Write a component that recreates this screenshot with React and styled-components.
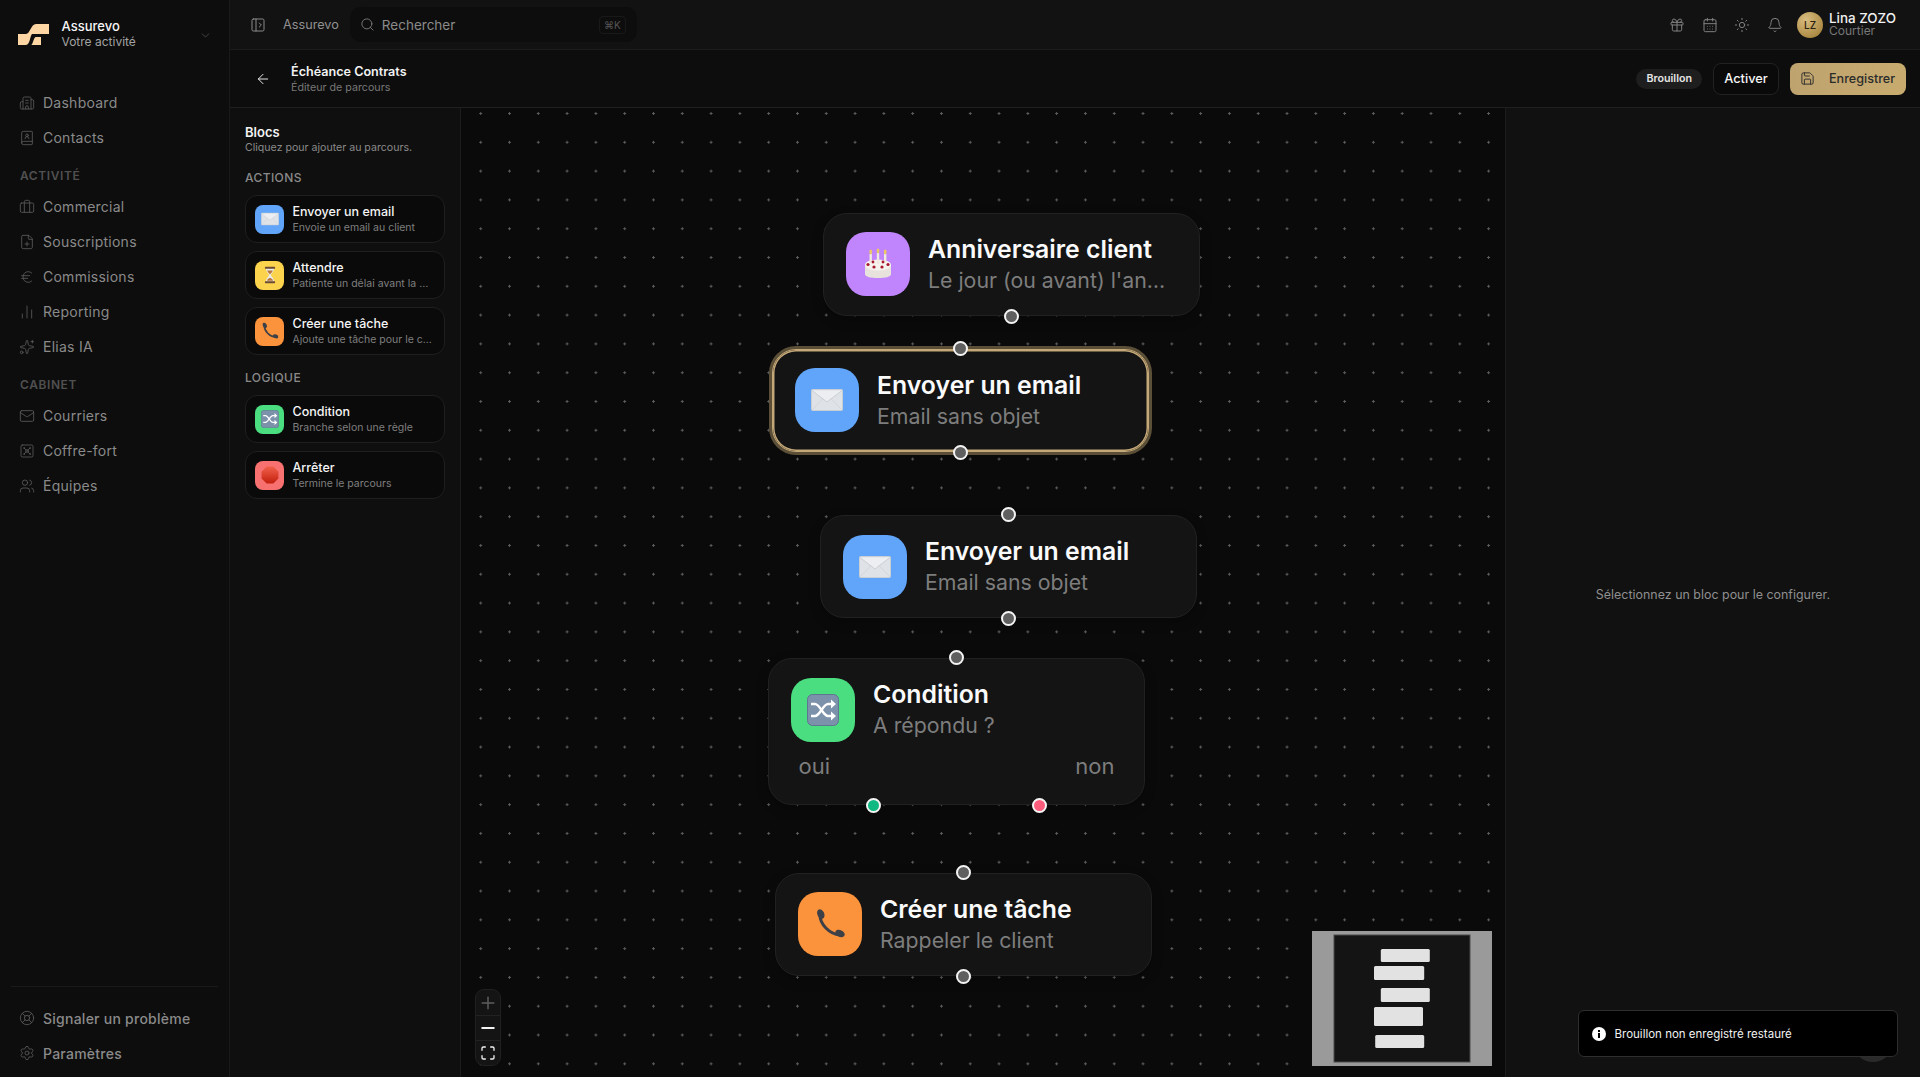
import React from 'react'
import styled, { createGlobalStyle } from 'styled-components'
import {
  ArrowLeft, Bell, BookUser, Briefcase, Building2, CalendarDays, ChartNoAxesColumn, ChevronDown,
  Euro, FilePlus, Gift, LifeBuoy, Mail, Maximize, Minus, PanelLeftOpen, Plus, Save, Search,
  Settings, Sparkles, Sun, Users, Vault,
} from 'lucide-react'

const GlobalStyle = createGlobalStyle`
  html, body, #root { margin: 0; padding: 0; height: 100%; }
  body { background: #0d0d0d; font-family: Inter, "Noto Sans", sans-serif; color: #fff; overflow: hidden; }
  * { box-sizing: border-box; }
`

// emoji are drawn, no colour emoji font on the box
const EnvelopeEmoji = ({ size }) => (
  <svg width={size} height={size} viewBox="0 0 32 32">
    <rect x="0.5" y="5.5" width="31" height="21" rx="1" fill="#dfe3e7" stroke="#c9ced4" />
    <path d="M1 6.5 L16 18 L31 6.5" fill="#eceef1" stroke="#c3c8ce" strokeWidth="0.8" />
    <path d="M1 26 L12 14.5 M31 26 L20 14.5" stroke="#cfd3d8" strokeWidth="0.8" />
  </svg>
)

const CakeEmoji = ({ size }) => (
  <svg width={size} height={size} viewBox="0 0 32 32">
    <path d="M3 17 v9 c0 3 6 4 13 4 s13 -1 13 -4 v-9 z" fill="#e7e3dc" />
    <ellipse cx="16" cy="17" rx="13" ry="5.5" fill="#f6f3ee" />
    <rect x="7.5" y="6" width="2.4" height="9" fill="#efe9df" />
    <rect x="14.8" y="5" width="2.4" height="11" fill="#efe9df" />
    <rect x="22" y="6" width="2.4" height="9" fill="#efe9df" />
    <ellipse cx="8.7" cy="4" rx="1.4" ry="2.4" fill="#eac765" />
    <ellipse cx="16" cy="3" rx="1.4" ry="2.4" fill="#eac765" />
    <ellipse cx="23.2" cy="4" rx="1.4" ry="2.4" fill="#eac765" />
    <circle cx="6" cy="16.5" r="1.6" fill="#a8182f" />
    <circle cx="11" cy="14" r="1.4" fill="#a8182f" />
    <circle cx="12" cy="19" r="1.6" fill="#a8182f" />
    <circle cx="20" cy="19" r="1.6" fill="#a8182f" />
    <circle cx="21" cy="14" r="1.4" fill="#a8182f" />
    <circle cx="26" cy="16.5" r="1.6" fill="#a8182f" />
  </svg>
)

const HourglassEmoji = ({ size }) => (
  <svg width={size} height={size} viewBox="0 0 32 32">
    <path d="M9 4 h14 c0 7 -5 9 -5.5 12 c0.5 3 5.5 5 5.5 12 h-14 c0 -7 5 -9 5.5 -12 c-0.5 -3 -5.5 -5 -5.5 -12 z" fill="#e9edf0" />
    <path d="M11 8 h10 c-1 3.5 -3.5 5 -5 7 c-1.5 -2 -4 -3.5 -5 -7 z" fill="#b8763a" />
    <path d="M10.5 26 c1 -3 3.5 -4 5.5 -5 c2 1 4.5 2 5.5 5 z" fill="#b8763a" />
    <rect x="7" y="1.5" width="18" height="3.5" rx="1" fill="#6b4a33" />
    <rect x="7" y="27" width="18" height="3.5" rx="1" fill="#6b4a33" />
  </svg>
)

const PhoneEmoji = ({ size }) => (
  <svg width={size} height={size} viewBox="0 0 32 32">
    <path d="M6 7 C6 16 15 26 26 27" fill="none" stroke="#3d4147" strokeWidth="3" strokeLinecap="round" />
    <ellipse cx="6.8" cy="6" rx="3.4" ry="5" transform="rotate(-25 6.8 6)" fill="#3d4147" />
    <ellipse cx="26" cy="25.5" rx="3.4" ry="5" transform="rotate(-65 26 25.5)" fill="#3d4147" />
  </svg>
)

const ShuffleEmoji = ({ size }) => (
  <svg width={size} height={size} viewBox="0 0 32 32">
    <rect x="0.5" y="0.5" width="31" height="31" rx="5" fill="#7c92ab" stroke="#5f7690" />
    <g fill="none" stroke="#fff" strokeWidth="2.4">
      <path d="M4 10 h4 c5 0 8 12 13 12 h4" />
      <path d="M4 22 h4 c5 0 8 -12 13 -12 h4" />
    </g>
    <path d="M24 5.5 l5 4.5 l-5 4.5 z M24 17.5 l5 4.5 l-5 4.5 z" fill="#fff" />
  </svg>
)

const StopEmoji = ({ size }) => (
  <svg width={size} height={size} viewBox="0 0 32 32">
    <defs>
      <linearGradient id="stopFill" x1="0" y1="0" x2="0" y2="1">
        <stop offset="0" stopColor="#f0604a" />
        <stop offset="1" stopColor="#c4200f" />
      </linearGradient>
    </defs>
    <path d="M10 1 h12 l9 9 v12 l-9 9 h-12 l-9 -9 v-12 z" fill="url(#stopFill)" />
  </svg>
)

const emojis = {
  mail: { Emoji: EnvelopeEmoji, bg: '#60a5fa' },
  cake: { Emoji: CakeEmoji, bg: '#c084fc' },
  wait: { Emoji: HourglassEmoji, bg: '#fcd34d' },
  phone: { Emoji: PhoneEmoji, bg: '#fb923c' },
  shuffle: { Emoji: ShuffleEmoji, bg: '#4ade80' },
  stop: { Emoji: StopEmoji, bg: '#f87171' },
}

const Logo = () => (
  <svg width="31" height="23" viewBox="0 0 31 23">
    <path d="M0 11 H8 C12 11 13 1 18 1 H31 V11 H14 C12 13 12 22 8 22 H0 Z" fill="#fdd6a4" />
    <path d="M13 22 C15 22 15.5 14 18 14 H23 V22 Z" fill="#fdd6a4" />
  </svg>
)

const Page = styled.div`
  display: flex;
  width: 1920px;
  height: 1077px;
  overflow: hidden;
`

const Sidebar = styled.aside`
  width: 229px;
  flex: none;
  display: flex;
  flex-direction: column;
  background: #0d0d0d;
`

const Brand = styled.div`
  height: 85px;
  flex: none;
  display: flex;
  align-items: flex-start;
  padding: 18px 17px 0 18px;
  gap: 12.5px;
  svg:first-child { margin-top: 5px; }
`

const BrandText = styled.div`
  flex: 1;
  div:first-child { font-size: 13px; font-weight: 500; line-height: 16px; color: #f5f5f5; }
  div:last-child { font-size: 12px; line-height: 16px; color: #a3a3a3; }
`

const BrandChevron = styled(ChevronDown)`
  margin-top: 11px;
  color: #4f4f4f;
`

const NavLabel = styled.div`
  height: 34px;
  padding: 14px 0 0 20px;
  font-size: 12px;
  line-height: 14px;
  font-weight: 600;
  letter-spacing: 0.6px;
  color: #505050;
`

const NavItem = styled.div`
  height: 35px;
  display: flex;
  align-items: center;
  gap: 8px;
  padding-left: 19px;
  font-size: 14px;
  font-weight: ${p => (p.$strong ? 500 : 400)};
  letter-spacing: 0.25px;
  color: #8a8a8a;
  svg { color: #5c5c5c; flex: none; }
`

const SideFooter = styled.div`
  margin-top: auto;
  margin-inline: 11px;
  padding: 14px 0 6.5px;
  border-top: 1px solid #1a1a1a;
  ${NavItem} { margin-left: -11px; }
`

const Main = styled.div`
  flex: 1;
  min-width: 0;
  display: flex;
  flex-direction: column;
  border-left: 1px solid #1a1a1a;
`

const Topbar = styled.header`
  height: 50px;
  flex: none;
  display: flex;
  align-items: center;
  padding: 0 24px 0 20px;
  background: #121212;
  border-bottom: 1px solid #1c1c1c;
`

const TopCrumb = styled.span`
  margin-left: 17px;
  font-size: 12.7px;
  color: #909090;
`

const SearchBox = styled.div`
  width: 287px;
  height: 35px;
  margin-left: 11px;
  display: flex;
  align-items: center;
  gap: 7px;
  padding: 0 11px 0 10px;
  border-radius: 11px;
  background: #0d0d0d;
  font-size: 13.5px;
  color: #8a8a8a;
  svg { color: #7a7a7a; }
`

const Kbd = styled.span`
  margin-left: auto;
  width: 27px;
  height: 18px;
  display: flex;
  align-items: center;
  justify-content: center;
  border: 1px solid #191919;
  border-radius: 4px;
  font-size: 10px;
  color: #555;
`

const TopRight = styled.div`
  margin-left: auto;
  display: flex;
  align-items: center;
  gap: 16.5px;
  svg { color: #808080; }
`

const User = styled.div`
  display: flex;
  align-items: center;
  gap: 6px;
  margin-left: -2px;
`

const Avatar = styled.div`
  width: 26px;
  height: 26px;
  border-radius: 50%;
  display: flex;
  align-items: center;
  justify-content: center;
  background: radial-gradient(circle at 35% 30%, #d9bd80, #a8863f 80%);
  font-size: 10px;
  font-weight: 500;
  color: #2a2210;
`

const UserText = styled.div`
  div:first-child { font-size: 13.4px; font-weight: 500; line-height: 13px; color: #f0f0f0; }
  div:last-child { font-size: 12px; line-height: 12px; color: #777; }
`

const EditorBar = styled.div`
  height: 58px;
  flex: none;
  display: flex;
  align-items: center;
  padding: 0 14px 0 25px;
  background: #0d0d0d;
  border-bottom: 1px solid #1f1f1f;
`

const BackIcon = styled(ArrowLeft)`
  color: #e5e5e5;
  margin-right: 20px;
`

const EditorTitle = styled.div`
  padding-top: 2px;
  div:first-child { font-size: 12.6px; font-weight: 600; line-height: 16px; color: #f2f2f2; }
  div:last-child { font-size: 10.7px; line-height: 16px; color: #777; }
`

const EditorActions = styled.div`
  margin-left: auto;
  display: flex;
  align-items: center;
  gap: 11px;
`

const Badge = styled.span`
  height: 20px;
  padding: 0 10px;
  display: flex;
  align-items: center;
  border-radius: 10px;
  background: #1e1e1e;
  font-size: 10.7px;
  font-weight: 600;
  color: #e5e5e5;
`

const OutlineButton = styled.div`
  width: 66px;
  height: 32px;
  display: flex;
  align-items: center;
  justify-content: center;
  border: 1px solid #222;
  border-radius: 8px;
  background: #0a0a0a;
  font-size: 12.8px;
  font-weight: 500;
  color: #f5f5f5;
`

const GoldButton = styled.div`
  width: 116px;
  height: 32px;
  display: flex;
  align-items: center;
  gap: 14px;
  padding-left: 10px;
  border-radius: 8px;
  background: linear-gradient(100deg, #bfa36f, #c7ab6e);
  font-size: 12.6px;
  font-weight: 500;
  color: #2b2b2b;
`

const Body = styled.div`
  flex: 1;
  min-height: 0;
  display: flex;
`

const BlockPanel = styled.div`
  width: 230px;
  flex: none;
  padding: 16px 15px 0;
  background: #0f0f0f;
`

const PanelTitle = styled.div`
  font-size: 13px;
  line-height: 16px;
  font-weight: 600;
  color: #f2f2f2;
`

const PanelHint = styled.div`
  font-size: 10.6px;
  line-height: 15px;
  color: #8a8a8a;
`

const GroupLabel = styled.div`
  margin: ${p => p.$top}px 0 9px;
  font-size: 12px;
  line-height: 16px;
  font-weight: 500;
  letter-spacing: 0.4px;
  color: #8a8a8a;
`

const BlockList = styled.div`
  display: flex;
  flex-direction: column;
  gap: 8px;
`

const BlockCard = styled.div`
  height: 48px;
  display: flex;
  align-items: center;
  gap: 8.5px;
  padding: 0 9px;
  border: 1px solid #1f1f1f;
  border-radius: 12px;
  background: #0a0a0a;
`

const BlockIcon = styled.div`
  width: 29px;
  height: 29px;
  flex: none;
  display: flex;
  align-items: center;
  justify-content: center;
  border-radius: 8px;
  background: ${p => p.$bg};
`

const BlockName = styled.div`
  font-size: 12.5px;
  line-height: 16px;
  font-weight: 500;
  color: #f5f5f5;
`

const BlockDesc = styled.div`
  font-size: 10.5px;
  line-height: 15px;
  white-space: nowrap;
  color: #7f7f7f;
`

const Canvas = styled.div`
  position: relative;
  flex: 1;
  min-width: 0;
  background-color: #0a0a0a;
  background-image: radial-gradient(circle, #5c5c5c 0, #5c5c5c 1px, transparent 1.4px);
  background-size: 28.8px 28.8px;
  background-position: 5.3px -8.9px;
  border-left: 1px solid #1c1c1c;
`

const FlowNode = styled.div`
  position: absolute;
  left: ${p => p.$x}px;
  top: ${p => p.$y}px;
  width: 377px;
  height: ${p => p.$h || 103}px;
  border-radius: 24px;
  background: #141414;
  border: 1.5px solid ${p => (p.$selected ? '#c4a877' : '#212121')};
  box-shadow: ${p => (p.$selected ? '0 0 0 3px #5c4f38, 0 0 0 1.5px #c4a877 inset' : '0 4px 12px rgba(0,0,0,.25)')};
`

const NodeHead = styled.div`
  display: flex;
  align-items: center;
  gap: 18.5px;
  padding: 18.5px 22px 0;
`

const NodeIcon = styled.div`
  width: 64px;
  height: 64px;
  flex: none;
  display: flex;
  align-items: center;
  justify-content: center;
  border-radius: 20px;
  background: ${p => p.$bg};
`

const NodeTitle = styled.div`
  margin-top: 1px;
  font-size: 24.8px;
  line-height: 31px;
  font-weight: 600;
  color: #fafafa;
  white-space: nowrap;
`

const NodeDesc = styled.div`
  font-size: 21.3px;
  line-height: 31px;
  color: #7d7d7d;
  white-space: nowrap;
`

const Branches = styled.div`
  display: flex;
  justify-content: space-between;
  padding: 9px 29px 0 30px;
  font-size: 22px;
  line-height: 31px;
  color: #7d7d7d;
`

const Handle = styled.span`
  position: absolute;
  left: ${p => (p.$at ? `${p.$at}px` : '50%')};
  ${p => (p.$side === 'top' ? 'top: -9px;' : 'bottom: -9px;')}
  width: 15px;
  height: 15px;
  margin-left: -7.5px;
  border-radius: 50%;
  border: 2px solid #f4f4f4;
  background: ${p => p.$color || '#5f5f5f'};
`

const ZoomControls = styled.div`
  position: absolute;
  left: 14px;
  bottom: 11px;
  width: 26px;
  display: flex;
  flex-direction: column;
  border: 1px solid #202020;
  border-radius: 9px;
  background: #141414;
  overflow: hidden;
`

const ZoomButton = styled.div`
  height: 25px;
  display: flex;
  align-items: center;
  justify-content: center;
  color: ${p => (p.$off ? '#5e5e5e' : '#f2f2f2')};
  & + & { border-top: 1px solid #222; }
`

const MiniMap = styled.svg`
  position: absolute;
  right: 13px;
  bottom: 11px;
`

const ConfigPanel = styled.div`
  position: relative;
  width: 415px;
  flex: none;
  display: flex;
  align-items: center;
  justify-content: center;
  padding-top: 3px;
  border-left: 1px solid #1c1c1c;
  background: #111;
  font-size: 12.45px;
  color: #8f8f8f;
`

const HelpBubble = styled.span`
  position: absolute;
  right: 27px;
  bottom: 15px;
  width: 40px;
  height: 40px;
  border-radius: 50%;
  background: #2a2a2a;
`

const Toast = styled.div`
  position: absolute;
  right: 22px;
  bottom: 20px;
  width: 320px;
  height: 47px;
  display: flex;
  align-items: center;
  gap: 8.5px;
  padding-left: 13px;
  border: 1px solid #2e2e2e;
  border-radius: 6px;
  background: #000;
  font-size: 11.5px;
  color: #f2f2f2;
`

const mainNav = [
  { label: 'Dashboard', Icon: Building2 },
  { label: 'Contacts', Icon: BookUser },
]
const activityNav = [
  { label: 'Commercial', Icon: Briefcase },
  { label: 'Souscriptions', Icon: FilePlus },
  { label: 'Commissions', Icon: Euro },
  { label: 'Reporting', Icon: ChartNoAxesColumn },
  { label: 'Elias IA', Icon: Sparkles },
]
const cabinetNav = [
  { label: 'Courriers', Icon: Mail },
  { label: 'Coffre-fort', Icon: Vault },
  { label: 'Équipes', Icon: Users },
]

const actionBlocks = [
  { kind: 'mail', name: 'Envoyer un email', desc: 'Envoie un email au client' },
  { kind: 'wait', name: 'Attendre', desc: 'Patiente un délai avant la …' },
  { kind: 'phone', name: 'Créer une tâche', desc: 'Ajoute une tâche pour le c…' },
]
const logicBlocks = [
  { kind: 'shuffle', name: 'Condition', desc: 'Branche selon une règle' },
  { kind: 'stop', name: 'Arrêter', desc: 'Termine le parcours' },
]

const miniBlocks = [
  [46.8, 18, 49, 13],
  [40, 35, 50.2, 14],
  [46.8, 57, 49, 14],
  [40, 76, 49, 19],
  [41.2, 104, 49, 13],
]

const NavList = ({ items }) =>
  items.map(({ label, Icon }) => (
    <NavItem key={label}>
      <Icon size={16} strokeWidth={1.25} />
      {label}
    </NavItem>
  ))

const BlockRow = ({ kind, name, desc }) => {
  const { Emoji, bg } = emojis[kind]
  return (
    <BlockCard>
      <BlockIcon $bg={bg}><Emoji size={18} /></BlockIcon>
      <div>
        <BlockName>{name}</BlockName>
        <BlockDesc>{desc}</BlockDesc>
      </div>
    </BlockCard>
  )
}

const NodeContent = ({ kind, title, desc }) => {
  const { Emoji, bg } = emojis[kind]
  return (
    <NodeHead>
      <NodeIcon $bg={bg}><Emoji size={32} /></NodeIcon>
      <div>
        <NodeTitle>{title}</NodeTitle>
        <NodeDesc>{desc}</NodeDesc>
      </div>
    </NodeHead>
  )
}

const App = () => {
  return (
    <Page>
      <GlobalStyle />
      <Sidebar>
        <Brand>
          <Logo />
          <BrandText>
            <div>Assurevo</div>
            <div>Votre activité</div>
          </BrandText>
          <BrandChevron size={13} strokeWidth={1.5} />
        </Brand>
        <NavList items={mainNav} />
        <NavLabel>ACTIVITÉ</NavLabel>
        <NavList items={activityNav} />
        <NavLabel>CABINET</NavLabel>
        <NavList items={cabinetNav} />
        <SideFooter>
          <NavItem $strong><LifeBuoy size={16} strokeWidth={1.25} />Signaler un problème</NavItem>
          <NavItem $strong><Settings size={16} strokeWidth={1.25} />Paramètres</NavItem>
        </SideFooter>
      </Sidebar>

      <Main>
        <Topbar>
          <PanelLeftOpen size={16} strokeWidth={1.5} color="#8a8a8a" />
          <TopCrumb>Assurevo</TopCrumb>
          <SearchBox>
            <Search size={15} strokeWidth={1.5} />
            Rechercher
            <Kbd>⌘K</Kbd>
          </SearchBox>
          <TopRight>
            <Gift size={16} strokeWidth={1.5} />
            <CalendarDays size={16} strokeWidth={1.5} />
            <Sun size={16} strokeWidth={1.5} />
            <Bell size={16} strokeWidth={1.5} />
            <User>
              <Avatar>LZ</Avatar>
              <UserText>
                <div>Lina ZOZO</div>
                <div>Courtier</div>
              </UserText>
            </User>
          </TopRight>
        </Topbar>

        <EditorBar>
          <BackIcon size={16} strokeWidth={1.5} />
          <EditorTitle>
            <div>Échéance Contrats</div>
            <div>Éditeur de parcours</div>
          </EditorTitle>
          <EditorActions>
            <Badge>Brouillon</Badge>
            <OutlineButton>Activer</OutlineButton>
            <GoldButton><Save size={15} strokeWidth={1.5} />Enregistrer</GoldButton>
          </EditorActions>
        </EditorBar>

        <Body>
          <BlockPanel>
            <PanelTitle>Blocs</PanelTitle>
            <PanelHint>Cliquez pour ajouter au parcours.</PanelHint>
            <GroupLabel $top={15}>ACTIONS</GroupLabel>
            <BlockList>
              {actionBlocks.map(b => <BlockRow key={b.name} {...b} />)}
            </BlockList>
            <GroupLabel $top={15}>LOGIQUE</GroupLabel>
            <BlockList>
              {logicBlocks.map(b => <BlockRow key={b.name} {...b} />)}
            </BlockList>
          </BlockPanel>

          <Canvas>
            <FlowNode $x={361.5} $y={104.5}>
              <NodeContent kind="cake" title="Anniversaire client" desc="Le jour (ou avant) l'an…" />
              <Handle $side="bottom" />
            </FlowNode>
            <FlowNode $x={310.5} $y={240.5} $selected>
              <NodeContent kind="mail" title="Envoyer un email" desc="Email sans objet" />
              <Handle $side="top" />
              <Handle $side="bottom" />
            </FlowNode>
            <FlowNode $x={358.5} $y={407}>
              <NodeContent kind="mail" title="Envoyer un email" desc="Email sans objet" />
              <Handle $side="top" />
              <Handle $side="bottom" />
            </FlowNode>
            <FlowNode $x={306.5} $y={550} $h={147}>
              <NodeContent kind="shuffle" title="Condition" desc="A répondu ?" />
              <Branches><span>oui</span><span>non</span></Branches>
              <Handle $side="top" />
              <Handle $side="bottom" $at={105} $color="#10b981" />
              <Handle $side="bottom" $at={271} $color="#fb5c7c" />
            </FlowNode>
            <FlowNode $x={313.5} $y={764.5}>
              <NodeContent kind="phone" title="Créer une tâche" desc="Rappeler le client" />
              <Handle $side="top" />
              <Handle $side="bottom" />
            </FlowNode>

            <ZoomControls>
              <ZoomButton $off><Plus size={20} strokeWidth={1.75} /></ZoomButton>
              <ZoomButton><Minus size={20} strokeWidth={2.2} /></ZoomButton>
              <ZoomButton><Maximize size={16} strokeWidth={2} /></ZoomButton>
            </ZoomControls>

            <MiniMap width="180" height="135" viewBox="0 0 180 135">
              <rect width="180" height="135" fill="#9a9a9a" />
              <rect x="22" y="4" width="136" height="127" fill="#141414" stroke="#4a4a4a" />
              {miniBlocks.map(([x, y, w, h]) => (
                <rect key={y} x={x + 22} y={y} width={w} height={h} rx="1.5" fill="#e2e2e2" />
              ))}
            </MiniMap>
          </Canvas>

          <ConfigPanel>
            Sélectionnez un bloc pour le configurer.
            <HelpBubble />
            <Toast>
              <svg width="14" height="14" viewBox="0 0 14 14">
                <circle cx="7" cy="7" r="7" fill="#fff" />
                <rect x="6" y="6" width="2" height="5" fill="#000" />
                <rect x="6" y="3" width="2" height="2" fill="#000" />
              </svg>
              Brouillon non enregistré restauré
            </Toast>
          </ConfigPanel>
        </Body>
      </Main>
    </Page>
  )
}

export default App
